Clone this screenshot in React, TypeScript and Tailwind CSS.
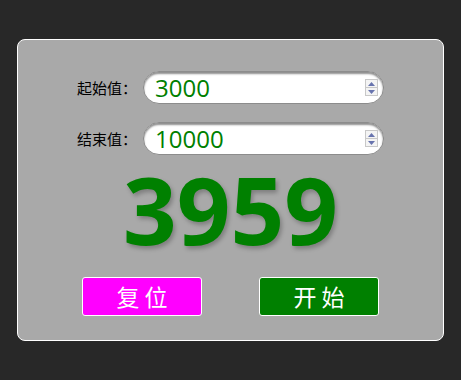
import React from "react";

function Spinner() {
  return (
    <div className="flex flex-col w-[13px] h-[17px] border border-[#c8c8c8] bg-[#f4f4f4] mr-[3px]">
      <div className="flex-1 flex items-center justify-center border-b border-[#c8c8c8]">
        <svg width="7" height="4" viewBox="0 0 7 4"><polygon points="0,4 3.5,0 7,4" fill="#6874ae" /></svg>
      </div>
      <div className="flex-1 flex items-center justify-center">
        <svg width="7" height="4" viewBox="0 0 7 4"><polygon points="0,0 3.5,4 7,0" fill="#6874ae" /></svg>
      </div>
    </div>
  );
}

function Row({ label, value }: { label: string; value: string }) {
  return (
    <div className="flex items-center justify-center">
      <span className="text-[15px] text-black leading-none w-[66px]">{label}</span>
      <div className="flex items-center w-[241px] h-[33px] rounded-[16px] bg-white border border-[#8c8c8c] shadow-[inset_0_2px_2px_rgba(0,0,0,0.45)] pl-[11px] pr-[2px]">
        <span className="flex-1 text-[24px] leading-none text-[#008000] font-['Open_Sans',sans-serif]">{value}</span>
        <Spinner />
      </div>
    </div>
  );
}

export default function App() {
  return (
    <div className="w-[461px] h-[380px] bg-[#282828] pt-[39px] pl-[17px] font-['Noto_Sans_CJK_SC',sans-serif]">
      <div className="w-[427px] h-[302px] rounded-lg border border-white bg-[#a9a9a9] flex flex-col pt-[31px]">
        <div className="flex flex-col gap-[18px]">
          <Row label="起始值：" value="3000" />
          <Row label="结束值：" value="10000" />
        </div>
        <div className="flex justify-center mt-[4px] h-[100px] items-center">
          <span className="text-[94px] font-bold leading-none text-[#008000] font-['Open_Sans',sans-serif] [text-shadow:2px_3px_4px_rgba(0,0,0,0.25)]">3959</span>
        </div>
        <div className="flex justify-center gap-[57px] mt-[18px]">
          <button className="w-[120px] h-[39px] rounded-[3px] border border-white bg-[#ff00ff] text-white text-[23px] leading-none">复 位</button>
          <button className="w-[120px] h-[39px] rounded-[3px] border border-white bg-[#008000] text-white text-[23px] leading-none">开 始</button>
        </div>
      </div>
    </div>
  );
}
